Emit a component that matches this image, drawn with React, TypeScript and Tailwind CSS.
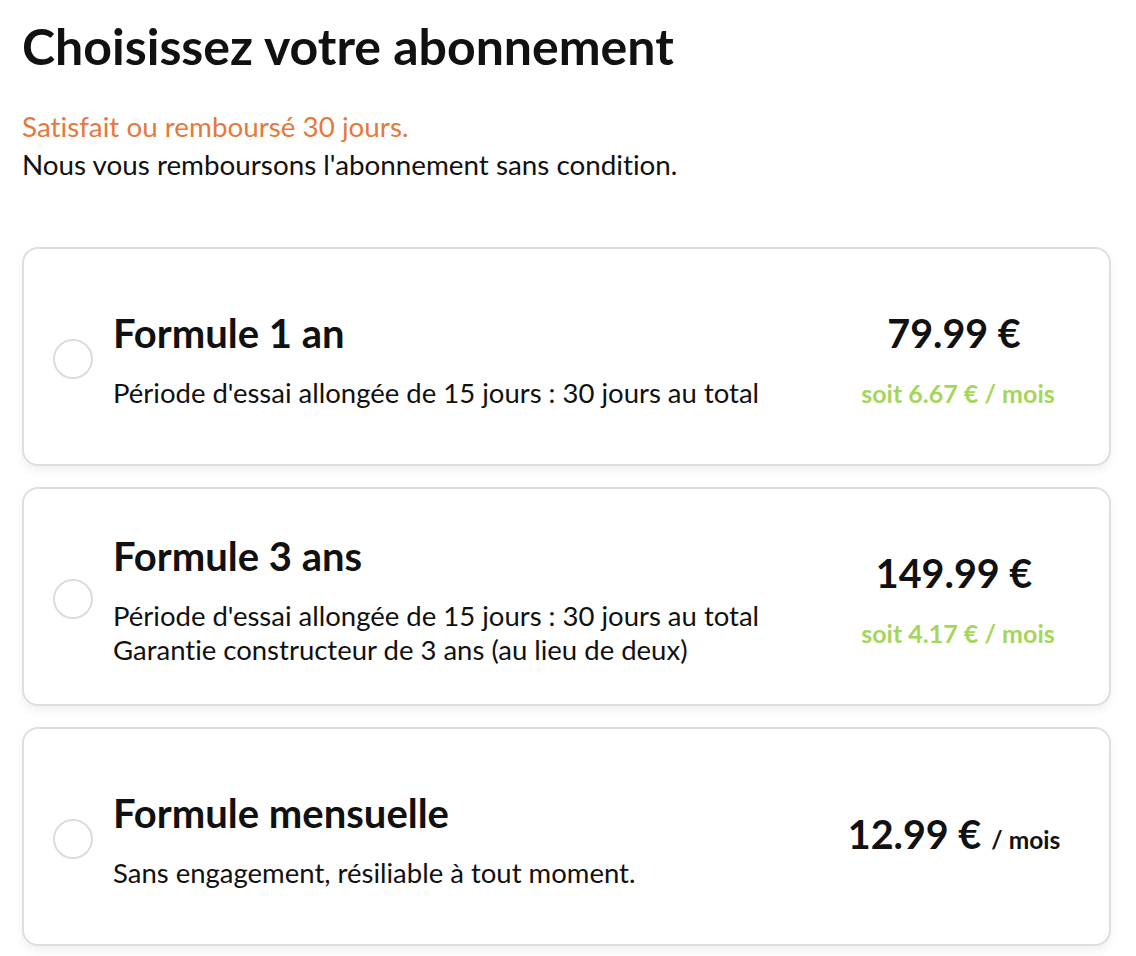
import React from "react";

type Plan = {
  title: string;
  lines: string[];
  price: string;
  sub?: string;
  perMonth?: boolean;
};

const plans: Plan[] = [
  {
    title: "Formule 1 an",
    lines: ["Période d'essai allongée de 15 jours : 30 jours au total"],
    price: "79.99 €",
    sub: "soit 6.67 € / mois",
  },
  {
    title: "Formule 3 ans",
    lines: [
      "Période d'essai allongée de 15 jours : 30 jours au total",
      "Garantie constructeur de 3 ans (au lieu de deux)",
    ],
    price: "149.99 €",
    sub: "soit 4.17 € / mois",
  },
  {
    title: "Formule mensuelle",
    lines: ["Sans engagement, résiliable à tout moment."],
    price: "12.99 €",
    perMonth: true,
  },
];

function PlanCard({ plan }: { plan: Plan }) {
  return (
    <div className="flex h-[219px] items-center rounded-[16px] border-2 border-[#dedede] bg-white pl-[29px] pr-[24px] shadow-[0_5px_10px_rgba(0,0,0,0.06)]">
      <div className="mt-[5px] h-[40px] w-[40px] shrink-0 rounded-full border-2 border-[#dcdcdc] bg-white" />
      <div className="ml-[20px] mt-[5px] flex min-w-0 flex-1 flex-col">
        <div className="text-[40px] font-bold leading-[48px] text-[#111]">{plan.title}</div>
        <div className="mt-[19px] text-[27.5px] leading-[34px] text-[#111]">
          {plan.lines.map((l) => (
            <div key={l} className="whitespace-nowrap">{l}</div>
          ))}
        </div>
      </div>
      <div className={`flex w-[262px] shrink-0 flex-col items-center ${plan.perMonth ? "mb-[4px]" : "mt-[5px]"}`}>
        {plan.perMonth ? (
          <div className="flex items-baseline whitespace-nowrap text-[#111]">
            <span className="text-[39.5px] font-bold leading-[48px]">{plan.price}</span>
            <span className="ml-[10px] text-[24.5px] font-bold">/ mois</span>
          </div>
        ) : (
          <>
            <div className="text-[39.5px] font-bold leading-[48px] text-[#111]">{plan.price}</div>
            <div className="mt-[19px] whitespace-nowrap pl-[8px] text-[25px] font-bold leading-[34px] text-[#a6d55b]">{plan.sub}</div>
          </>
        )}
      </div>
    </div>
  );
}

export default function App() {
  return (
    <div
      className="min-h-screen bg-white [font-variant-ligatures:none]"
      style={{ fontFamily: "Lato, 'Noto Sans', sans-serif" }}
    >
      <div className="ml-[22px] w-[1089px] pt-[17px]">
        <h1 className="text-[50px] font-bold leading-[58px] text-[#111]">Choisissez votre abonnement</h1>
        <div className="mt-[33px] mb-[63px] text-[27.8px] leading-[38px]">
          <div className="text-[#e5793b]">Satisfait ou remboursé 30 jours.</div>
          <div className="text-[#111]">Nous vous remboursons l'abonnement sans condition.</div>
        </div>
        <div className="flex flex-col gap-[21px]">
          {plans.map((p) => (
            <PlanCard key={p.title} plan={p} />
          ))}
        </div>
      </div>
    </div>
  );
}
